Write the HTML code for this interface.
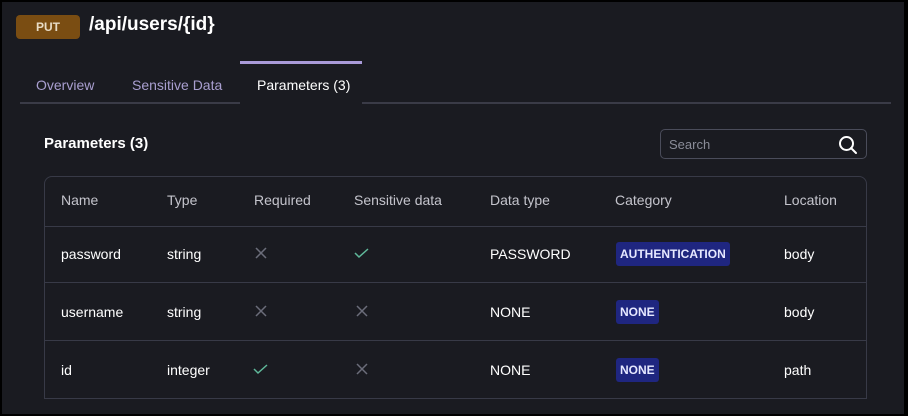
<!DOCTYPE html>
<html><head><style>
*{margin:0;padding:0;box-sizing:border-box}
body{width:908px;height:416px;background:#000;font-family:"Liberation Sans",sans-serif;overflow:hidden;position:relative}
.bg{position:absolute;left:2px;top:2px;width:902px;height:412px;background:#1a1b21}
.a{position:absolute;white-space:nowrap}
.put{left:16px;top:15px;width:64px;height:24px;background:#7a4d12;border-radius:4px;color:#e8dcc6;font-size:12px;font-weight:bold;text-align:center;line-height:24px}
.path{left:89px;top:14px;color:#fff;font-size:19px;font-weight:bold}
.tab{top:77px;font-size:14px;color:#a99fd0}
.tabline{left:20px;top:102px;width:871px;height:2px;background:#3a3b47}
.act{left:240px;top:61px;width:122px;height:43px;background:#1a1b21;border-top:3px solid #a99ad8}
.h2{left:44px;top:135px;color:#fff;font-size:15px;font-weight:bold}
.search{left:660px;top:129px;width:207px;height:30px;border:1px solid #4a4c5a;border-radius:5px}
.table{left:44px;top:176px;width:823px;height:223px;border:1px solid #383a47;border-radius:8px 8px 0 0}
.hl{position:absolute;left:44px;width:823px;height:1px;background:#383a47}
.th{top:192px;font-size:14px;color:#c4c4cc}
.td{font-size:14px;color:#fff}
.badge{background:#1f2680;color:#e6e8ff;font-size:12px;font-weight:bold;border-radius:3px;padding:0 4px;height:24px;line-height:24px}
</style></head><body>
<div class="bg"></div>
<div class="a put">PUT</div>
<div class="a path">/api/users/{id}</div>
<div class="a tabline"></div>
<div class="a act"></div>
<div class="a tab" style="left:36px">Overview</div>
<div class="a tab" style="left:132px">Sensitive Data</div>
<div class="a tab" style="left:257px;color:#fff">Parameters (3)</div>
<div class="a h2">Parameters (3)</div>
<div class="a search"><span class="a" style="left:8px;top:7px;font-size:13px;color:#8a8c98">Search</span>
<svg class="a" style="left:177px;top:5px" width="20" height="20" viewBox="0 0 20 20"><circle cx="8.5" cy="8.5" r="6.5" fill="none" stroke="#fff" stroke-width="2"/><path d="M13 13l5 5" stroke="#fff" stroke-width="2" stroke-linecap="round"/></svg></div>
<div class="a table"></div>
<div class="hl" style="top:226px"></div>
<div class="hl" style="top:282px"></div>
<div class="hl" style="top:340px"></div>
<div class="a th" style="left:61px">Name</div>
<div class="a th" style="left:167px">Type</div>
<div class="a th" style="left:254px">Required</div>
<div class="a th" style="left:354px">Sensitive data</div>
<div class="a th" style="left:490px">Data type</div>
<div class="a th" style="left:615px">Category</div>
<div class="a th" style="left:784px">Location</div>

<div class="a td" style="left:61px;top:246px">password</div>
<div class="a td" style="left:167px;top:246px">string</div>
<div class="a td" style="left:490px;top:246px">PASSWORD</div>
<div class="a badge" style="left:616px;top:242px">AUTHENTICATION</div>
<div class="a td" style="left:784px;top:246px">body</div>

<div class="a td" style="left:61px;top:304px">username</div>
<div class="a td" style="left:167px;top:304px">string</div>
<div class="a td" style="left:490px;top:304px">NONE</div>
<div class="a badge" style="left:616px;top:300px">NONE</div>
<div class="a td" style="left:784px;top:304px">body</div>

<div class="a td" style="left:61px;top:362px">id</div>
<div class="a td" style="left:167px;top:362px">integer</div>
<div class="a td" style="left:490px;top:362px">NONE</div>
<div class="a badge" style="left:616px;top:358px">NONE</div>
<div class="a td" style="left:784px;top:362px">path</div>

<svg class="a" style="left:0;top:0" width="908" height="416">
<g stroke="#6b6d7a" stroke-width="1.5" fill="none">
<path d="M256 248l10 10M266 248l-10 10"/>
<path d="M256 306l10 10M266 306l-10 10"/>
<path d="M357 306l10 10M367 306l-10 10"/>
<path d="M357 364l10 10M367 364l-10 10"/>
</g>
<g stroke="#5fb89a" stroke-width="1.5" fill="none">
<path d="M355 253l4 4 9-8"/>
<path d="M254 369l4 4 9-8"/>
</g>
</svg>
</body></html>
